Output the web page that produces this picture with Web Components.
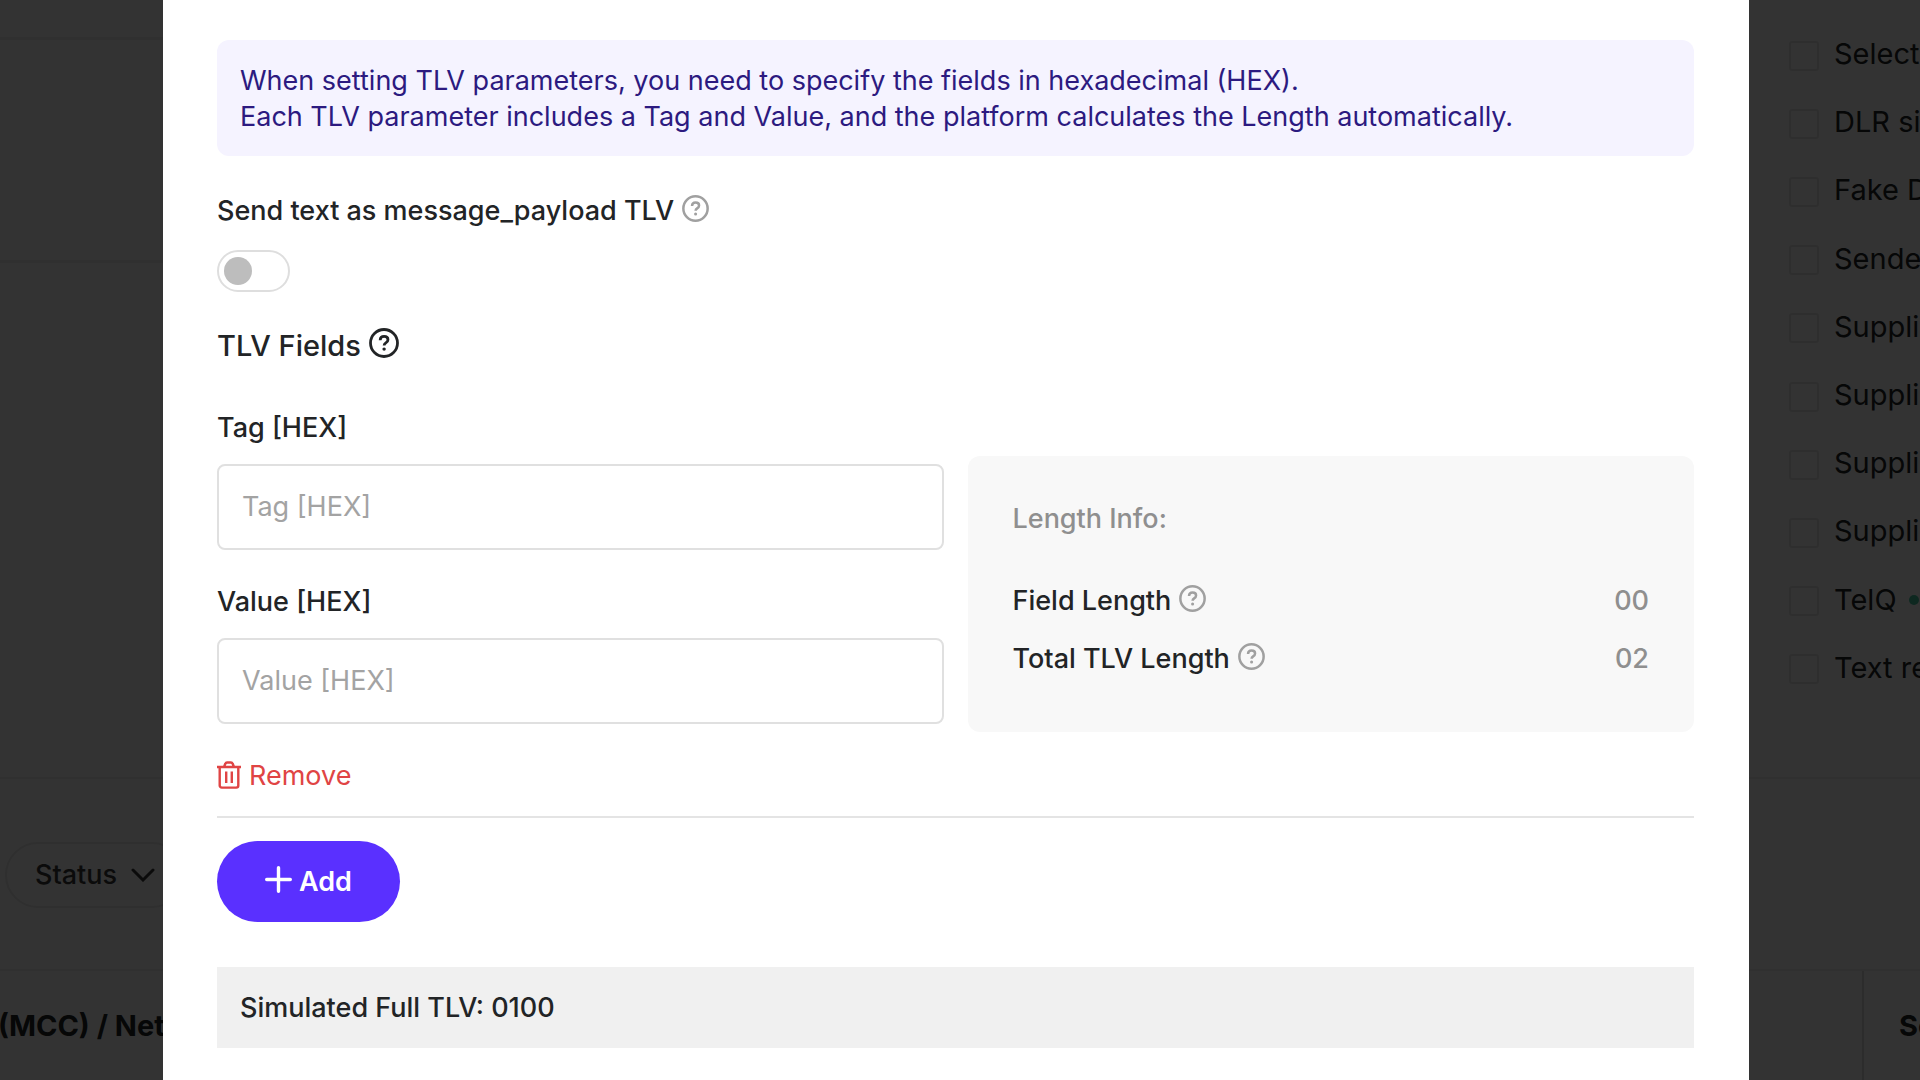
<!DOCTYPE html>
<html lang="en">
<head>
<meta charset="utf-8">
<title>TLV parameters</title>
<style>
  html, body {
    margin: 0;
    height: 100%;
  }
  body {
    overflow: hidden;
    font-family: Inter, "Liberation Sans", sans-serif;
    font-size: 27px;
    line-height: 36px;
    color: #222426;
    background: #fff;
  }
</style>
</head>
<body>

<test-page></test-page>

<tlv-dialog>
  <info-note>When setting TLV parameters, you need to specify the fields in hexadecimal (HEX).<br>Each TLV parameter includes a Tag and Value, and the platform calculates the Length automatically.</info-note>
  <toggle-switch>Send text as message_payload TLV</toggle-switch>
  <tlv-fields></tlv-fields>
  <tlv-result>Simulated Full TLV: 0100</tlv-result>
</tlv-dialog>

<script>
  // small helper, every element below has an open shadow root
  function attach(el, html) {
    const template = document.createElement('template');
    template.innerHTML = html;
    el.attachShadow({ mode: 'open' }).appendChild(template.content.cloneNode(true));
  }

  class HelpIcon extends HTMLElement {
    constructor() {
      super();
      attach(this, `
        <style>
          :host {
            display: block;
            flex: none;
            width: var(--help-size, 27px);
            padding-bottom: 6px;
            color: var(--help-color, #a0a0a0);
          }
          svg { display: block; width: 100%; height: auto; }
        </style>
        <svg viewBox="0 0 28 28" fill="none" stroke="currentColor" stroke-width="2.6" role="img" aria-label="Help">
          <circle cx="14" cy="14" r="12.6"/>
          <path d="M10.4 11.4c.1-2.3 1.6-3.5 3.7-3.5 2.2 0 3.6 1.2 3.6 3 0 1.600-.9 2.300-2 3-1.100.7-1.600 1.200-1.600 2.500"/>
          <circle cx="14.1" cy="19.7" r="1.6" fill="currentColor" stroke="none"/>
        </svg>
      `);
    }
  }
  customElements.define('help-icon', HelpIcon);

  class InfoNote extends HTMLElement {
    constructor() {
      super();
      attach(this, `
        <style>
          :host {
            display: block;
            padding: 23px 23px 21px;
            border-radius: 12px;
            background: #f5f3ff;
            color: #2c1a80;
          }
        </style>
        <slot></slot>
      `);
    }
  }
  customElements.define('info-note', InfoNote);

  class ToggleSwitch extends HTMLElement {
    constructor() {
      super();
      attach(this, `
        <style>
          :host { display: block; margin-top: 37px; }
          .title {
            display: flex;
            align-items: center;
            gap: 8px;
            margin-bottom: 21px;
            font-weight: 500;
          }
          input {
            appearance: none;
            display: flex;
            align-items: center;
            box-sizing: border-box;
            width: 73px;
            height: 42px;
            margin: 0;
            padding: 0 5px;
            border: 2px solid #dedede;
            border-radius: 21px;
            background: #fff;
          }
          input::before {
            content: "";
            width: 28px;
            height: 28px;
            border-radius: 50%;
            background: #bdbdbd;
          }
          input:checked { justify-content: flex-end; border-color: #5a30ff; }
          input:checked::before { background: #5a30ff; }
        </style>
        <div class="title">
          <label for="toggle"><slot></slot></label>
          <help-icon></help-icon>
        </div>
        <input type="checkbox" id="toggle" role="switch">
      `);
    }
  }
  customElements.define('toggle-switch', ToggleSwitch);

  class TextField extends HTMLElement {
    constructor() {
      super();
      attach(this, `
        <style>
          :host { display: block; }
          label { display: block; margin-bottom: 18px; font-weight: 500; }
          input {
            box-sizing: border-box;
            display: block;
            width: 100%;
            height: 86px;
            padding: 0 23px 2px;
            border: 2px solid #e0e0e0;
            border-radius: 8px;
            background: #fff;
            font: inherit;
            color: inherit;
            outline: none;
          }
          input::placeholder { color: #a3a3a3; opacity: 1; }
          input:focus { border-color: #5a30ff; }
        </style>
        <label for="field"></label>
        <input type="text" id="field">
      `);
      const name = this.getAttribute('label');
      this.shadowRoot.querySelector('label').textContent = name;
      this.shadowRoot.querySelector('input').placeholder = name;
    }
  }
  customElements.define('text-field', TextField);

  class LengthInfo extends HTMLElement {
    constructor() {
      super();
      attach(this, `
        <style>
          :host {
            display: block;
            padding: 45px 45px 55px;
            border-radius: 12px;
            background: #f8f8f8;
            font-weight: 500;
          }
          h3 { margin: 0 0 46px; font: inherit; color: #8f8f8f; }
          dl { display: grid; gap: 22px; margin: 0; }
          .row { display: flex; justify-content: space-between; }
          dt { display: flex; align-items: center; gap: 8px; }
          dd { margin: 0; color: #8f8f8f; }
        </style>
        <h3>Length Info:</h3>
        <dl>
          <div class="row"><dt>Field Length <help-icon></help-icon></dt><dd>00</dd></div>
          <div class="row"><dt>Total TLV Length <help-icon></help-icon></dt><dd>02</dd></div>
        </dl>
      `);
    }
  }
  customElements.define('length-info', LengthInfo);

  class TlvFields extends HTMLElement {
    constructor() {
      super();
      attach(this, `
        <style>
          :host { display: block; margin-top: 36px; }
          h2 {
            display: flex;
            align-items: center;
            gap: 8px;
            margin: 0 0 46px;
            font-size: 29px;
            font-weight: 500;
            --help-size: 30px;
            --help-color: #222426;
          }
          .grid {
            display: grid;
            grid-template-columns: 1fr 1fr;
            gap: 24px;
            align-items: end;
          }
          .inputs { display: grid; gap: 34px; padding-bottom: 8px; }
          button { font: inherit; border: 0; cursor: pointer; }
          .remove {
            display: flex;
            align-items: center;
            gap: 8px;
            margin-top: 26px;
            padding: 0;
            background: none;
            color: #e04444;
          }
          .remove svg { padding-bottom: 2px; }
          hr {
            margin: 22px 0 23px;
            border: 0;
            border-top: 2px solid #e4e4e4;
          }
          .add {
            display: flex;
            align-items: center;
            gap: 7px;
            height: 81px;
            padding: 0 48px;
            border-radius: 41px;
            background: #5a30ff;
            color: #fff;
            font-weight: 600;
          }
          svg { display: block; flex: none; }
          .add svg { padding-bottom: 4px; }
        </style>
        <h2>TLV Fields <help-icon></help-icon></h2>
        <div class="grid">
          <div class="inputs">
            <text-field label="Tag [HEX]"></text-field>
            <text-field label="Value [HEX]"></text-field>
          </div>
          <length-info></length-info>
        </div>
        <button class="remove" type="button">
          <svg width="24" height="28" viewBox="0 0 24 28" fill="none" stroke="currentColor" stroke-width="2.4" stroke-linejoin="round" aria-hidden="true">
            <path d="M0 6h24M2.700 6v18.600a2 2 0 0 0 2 2h14.600a2 2 0 0 0 2-2V6M7 6l1.300-3.200a2 2 0 0 1 1.800-1.300h3.800a2 2 0 0 1 1.800 1.300L17 6"/>
            <path d="M9.200 10.500v11.500M14.800 10.500v11.500"/>
          </svg>
          Remove
        </button>
        <hr>
        <button class="add" type="button">
          <svg width="27" height="27" viewBox="0 0 27 27" fill="none" stroke="currentColor" stroke-width="3.4" stroke-linecap="round" aria-hidden="true">
            <path d="M13.500 1.700v23.600M1.700 13.500h23.600"/>
          </svg>
          Add
        </button>
      `);
    }
  }
  customElements.define('tlv-fields', TlvFields);

  class TlvResult extends HTMLElement {
    constructor() {
      super();
      attach(this, `
        <style>
          :host {
            display: block;
            margin-top: 45px;
            padding: 23px 23px 22px;
            background: #f0f0f0;
            font-weight: 500;
          }
        </style>
        <slot></slot>
      `);
    }
  }
  customElements.define('tlv-result', TlvResult);

  // dark backdrop with the white panel on it
  class TlvDialog extends HTMLElement {
    constructor() {
      super();
      attach(this, `
        <style>
          :host {
            position: fixed;
            inset: 0;
            display: flex;
            padding: 0 171px 0 163px;
            background: rgba(0, 0, 0, .8);
          }
          .panel {
            flex: 1;
            min-width: 0;
            padding: 40px 55px 32px 54px;
            background: #fff;
          }
        </style>
        <div class="panel" role="dialog" aria-label="TLV parameters"><slot></slot></div>
      `);
    }
  }
  customElements.define('tlv-dialog', TlvDialog);

  class CheckItem extends HTMLElement {
    constructor() {
      super();
      attach(this, `
        <style>
          :host { display: block; font-size: 29px; white-space: nowrap; }
          label { display: flex; align-items: center; gap: 15px; }
          input {
            appearance: none;
            box-sizing: border-box;
            flex: none;
            width: 30px;
            height: 30px;
            margin: 3px 0 0;
            border: 2px solid #e6e6e6;
            border-radius: 3px;
          }
          .dot {
            display: none;
            width: 10px;
            height: 10px;
            margin-left: -3px;
            border-radius: 50%;
            background: #46c8a0;
          }
          :host([online]) .dot { display: block; }
        </style>
        <label><input type="checkbox"><slot></slot><span class="dot"></span></label>
      `);
    }
  }
  customElements.define('check-item', CheckItem);

  // page that stays behind the dialog
  class TestPage extends HTMLElement {
    constructor() {
      super();
      attach(this, `
        <style>
          :host {
            display: flex;
            flex-direction: column;
            height: 100%;
            overflow: hidden;
            --line: #f0f0f0;
          }
          .top {
            display: grid;
            grid-template-columns: 1fr 131px;
            column-gap: 60px;
            height: 777px;
            border-bottom: 2px solid var(--line);
          }
          .top > * { min-width: 0; }
          .rows { display: grid; grid-template-rows: 37px 223px 1fr; }
          .rows div + div { border-top: 3px solid var(--line); }
          .checks {
            display: grid;
            grid-auto-rows: 1fr;
            align-items: center;
            align-self: start;
            height: 682px;
            margin-top: 20px;
          }
          .filters { height: 190px; padding: 63px 0 0 5px; box-sizing: border-box; }
          .status {
            display: flex;
            align-items: center;
            gap: 14px;
            height: 66px;
            padding: 0 28px;
            border: 2px solid #e9e9e9;
            border-radius: 33px;
            background: none;
            color: #3a3a3a;
            font: inherit;
            font-weight: 500;
          }
          table { width: 100%; flex: 1; border-collapse: collapse; table-layout: fixed; font-size: 29px; }
          th {
            height: 110px;
            padding: 0;
            box-sizing: border-box;
            border-top: 2px solid var(--line);
            text-align: left;
            font-weight: 700;
            white-space: nowrap;
          }
          th:first-child { text-indent: -2px; }
          th:last-child { width: 57px; padding-left: 35px; border-left: 2px solid #dcdcdc; overflow: hidden; }
        </style>
        <div class="top">
          <div class="rows"><div></div><div></div><div></div></div>
          <div class="checks">
            <check-item>Select</check-item>
            <check-item>DLR si</check-item>
            <check-item>Fake D</check-item>
            <check-item>Sende</check-item>
            <check-item>Suppli</check-item>
            <check-item>Suppli</check-item>
            <check-item>Suppli</check-item>
            <check-item>Suppli</check-item>
            <check-item online>TelQ</check-item>
            <check-item>Text re</check-item>
          </div>
        </div>
        <div class="filters">
          <button class="status" type="button">
            Status
            <svg width="24" height="14" viewBox="0 0 24 14" fill="none" stroke="currentColor" stroke-width="3" stroke-linecap="round" aria-hidden="true"><path d="M2 2l10 10L22 2"/></svg>
          </button>
        </div>
        <table>
          <tr><th>(MCC) / Net</th><th>Se</th></tr>
        </table>
      `);
    }
  }
  customElements.define('test-page', TestPage);
</script>
</body>
</html>
